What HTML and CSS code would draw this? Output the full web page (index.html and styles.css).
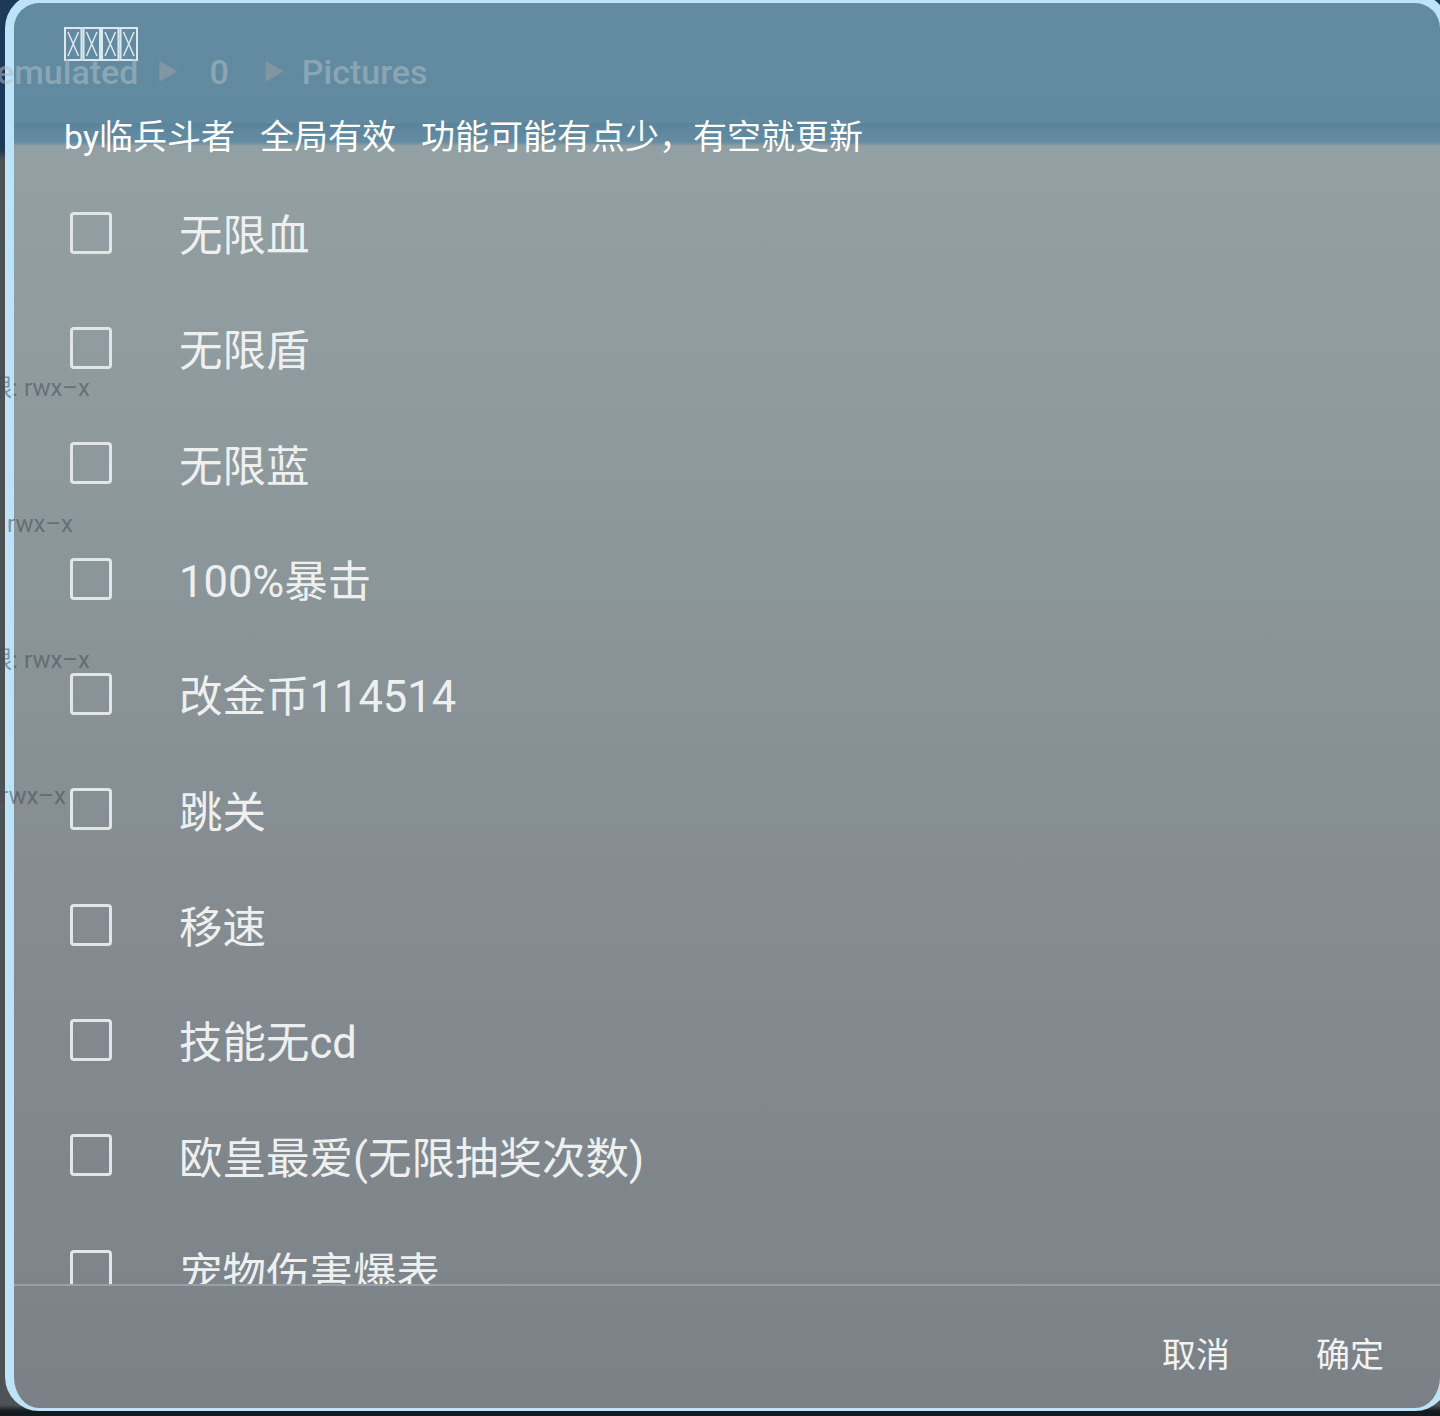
FILE: index.html
```html
<!DOCTYPE html>
<html>
<head>
  <meta charset="UTF-8" />
  <title>Options</title>
  <link rel="stylesheet" href="styles.css">
</head>
<body>

<div class="dialog">
  <div class="dialog-head">
    <!-- title font is missing on the device, shows as boxes -->
    <div class="title">
      <svg width="76" height="34" viewBox="0 0 76 34">
        <g fill="none" stroke="#dde7ee" stroke-width="2">
          <rect x="1" y="1" width="16.5" height="32" />
          <path d="M4 5 L14.5 29 M14.5 5 L4 29" stroke-width="1.5" />
          <rect x="19.5" y="1" width="16.5" height="32" />
          <path d="M22.5 5 L33 29 M33 5 L22.5 29" stroke-width="1.5" />
          <rect x="38" y="1" width="16.5" height="32" />
          <path d="M41 5 L51.5 29 M51.5 5 L41 29" stroke-width="1.5" />
          <rect x="56.5" y="1" width="16.5" height="32" />
          <path d="M59.5 5 L70 29 M70 5 L59.5 29" stroke-width="1.5" />
        </g>
      </svg>
    </div>
    <div class="subtitle">
      <span>by临兵斗者</span>
      <span>全局有效</span>
      <span>功能可能有点少，有空就更新</span>
    </div>
  </div>

  <div class="option-list" id="optionList"></div>

  <div class="dialog-actions">
    <button>取消</button>
    <button>确定</button>
  </div>
</div>

<!-- file manager behind the dialog, seen through it -->
<div class="ghost">
  <div class="crumbs">emulated<span class="arrow">&#9654;</span><span class="crumb">0</span><span class="arrow">&#9654;</span>Pictures</div>
  <div class="perms">
    <div><span>权限: rwx–x</span></div>
    <div class="short"><span>权限: rwx–x</span></div>
    <div><span>权限: rwx–x</span></div>
    <div class="shorter"><span>权限: rwx–x</span></div>
  </div>
</div>

<script>
  const options = [
    "无限血",
    "无限盾",
    "无限蓝",
    "100%暴击",
    "改金币114514",
    "跳关",
    "移速",
    "技能无cd",
    "欧皇最爱(无限抽奖次数)",
    "宠物伤害爆表"
  ];

  const list = document.getElementById("optionList");
  options.forEach(text => {
    const row = document.createElement("label");
    row.className = "option";
    row.innerHTML = `<span class="box"></span><span class="text">${text}</span>`;
    list.appendChild(row);
  });
</script>

</body>
</html>
```

FILE: styles.css
```css
html, body { height: 100%; }
body {
  margin: 0;
  overflow: hidden;
  font-family: Roboto, "Noto Sans CJK SC", sans-serif;
  background: linear-gradient(to bottom, #1c3a58 0, #1c3a58 150px, #4d5255 160px, #4d5255 1405px, #131b21 1411px);
}

.dialog {
  position: absolute;
  top: -6px;
  left: 5px;
  right: -9px;
  bottom: 5px;
  display: flex;
  flex-direction: column;
  border: 9px solid #bde3f8;
  border-bottom-width: 3px;
  border-radius: 34px;
  overflow: hidden;
  background: linear-gradient(to bottom,
    #628ba1 0, #618aa0 119px, #5a8298 121px, #5e879e 125px, #638ca3 139px,
    #929fa3 143px, #8e9a9e 420px, #848c91 900px, #7d848a 1280px, #7a8086 100%);
  color: #f1f3f3;
}

.dialog-head { padding: 24px 0 0 50px; }
.title { height: 34px; }
.title svg { display: block; }
.subtitle {
  display: flex;
  gap: 25px;
  margin-top: 56px;
  font-size: 34px;
  line-height: 40px;
  color: #ffffff;
}

.option-list {
  flex: 1;
  overflow: hidden;
  padding-top: 18px;
  border-bottom: 2px solid #99a0a5;
}
.option {
  display: flex;
  align-items: center;
  height: 115.33px;
  padding-left: 56px;
  cursor: pointer;
}
.box {
  width: 36px;
  height: 36px;
  border: 3px solid #e3e6e6;
  border-radius: 4px;
  flex-shrink: 0;
}
.text {
  margin-left: 67px;
  font-size: 43.5px;
  color: #eef0f0;
}

.dialog-actions {
  display: flex;
  justify-content: flex-end;
  gap: 86px;
  height: 122px;
  padding: 10px 56px 0 0;
  box-sizing: border-box;
  align-items: center;
}
.dialog-actions button {
  background: none;
  border: none;
  padding: 0;
  font-family: Roboto, "Noto Sans CJK SC", sans-serif;
  font-size: 34px;
  color: #f3f3f3;
  cursor: pointer;
}

.ghost {
  position: absolute;
  inset: 0;
  pointer-events: none;
}
.crumbs {
  position: absolute;
  top: 52px;
  left: -4px;
  font-size: 34px;
  font-weight: 500;
  line-height: 40px;
  color: rgba(175, 190, 198, 0.55);
  white-space: pre;
}
.crumbs .arrow { font-size: 22px; vertical-align: 5px; margin: 0 17px 0 18px; color: rgba(150, 160, 166, 0.6); }
.crumbs .crumb { margin: 0 16px 0 14px; }
.perms {
  position: absolute;
  top: 372px;
  left: 0;
  width: 90px;
  font-size: 24px;
  line-height: 32px;
  color: rgba(70, 76, 80, 0.55);
  white-space: nowrap;
}
.perms div {
  display: flex;
  justify-content: flex-end;
  overflow: hidden;
  height: 136px;
  align-items: flex-start;
}
.perms span { flex-shrink: 0; }
.perms .short { padding-right: 17px; }
.perms .shorter { padding-right: 24px; }
```
